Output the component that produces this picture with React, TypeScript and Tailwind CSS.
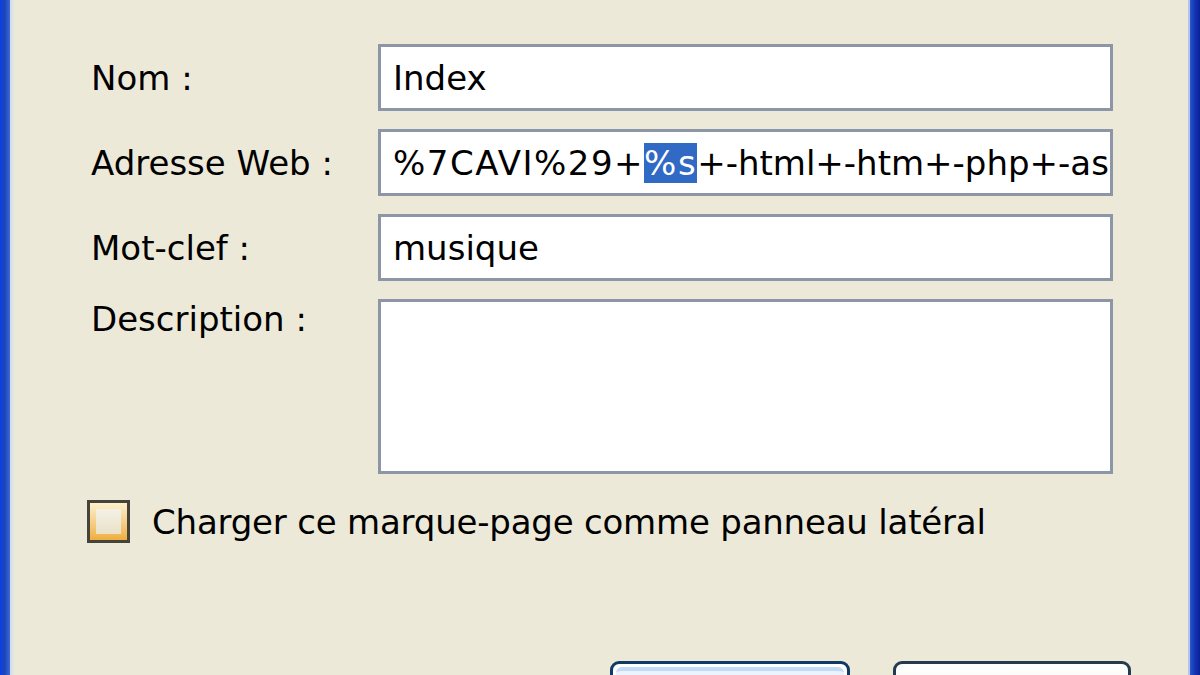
import * as React from 'react';

// Fenêtre « Propriétés du marque-page » (style Windows XP, agrandie)

function Field({ value }: { value: React.ReactNode }): React.ReactElement {
  return (
    <div className="flex h-[67px] items-center overflow-hidden whitespace-nowrap border-[3px] border-[#8d96a6] bg-white pl-[12px] pr-[5px] leading-[40px] text-black">
      {value}
    </div>
  );
}

function Label({ text, top }: { text: string; top?: boolean }): React.ReactElement {
  return (
    <div className={top ? 'pt-0 leading-[40px]' : 'flex h-[67px] items-center leading-[40px]'}>
      {text}
    </div>
  );
}

export default function App(): React.ReactElement {
  return (
    <div className="flex h-[675px] w-[1200px] overflow-hidden bg-[#ece9d8] font-['DejaVu_Sans',sans-serif] text-[34px] text-black">
      {/* bord gauche de la fenêtre */}
      <div className="w-[10px] shrink-0 bg-gradient-to-r from-[#0b3de6] via-[#1d46b6] to-[#3f6ad6]" />
      <div className="w-[4px] shrink-0 bg-gradient-to-r from-[#c9dbf4] to-[#e6e8dc]" />

      <div className="flex-1 pl-[77px] pt-[44px]">
        <div className="grid grid-cols-[287px_735px] gap-y-[18px]">
          <Label text="Nom :" />
          <Field value="Index" />

          <Label text="Adresse Web :" />
          <Field
            value={
              <span>
                <span className="tracking-[1.5px]">%7CAVI%29+</span>
                <span className="bg-[#316ac5] tracking-[1.5px] text-white">%s</span>
                +-html+-htm+-php+-asp
              </span>
            }
          />

          <Label text="Mot-clef :" />
          <Field value="musique" />

          <Label text="Description :" top />
          <div className="h-[175px] border-[3px] border-[#8d96a6] bg-white" />
        </div>

        <div className="mt-[26px] flex h-[43px] items-center">
          <div className="ml-[-4px] h-[43px] w-[43px] border-[3px] border-[#45433a] bg-gradient-to-b from-[#fdf1cd] to-[#eeae3a] p-[6px]">
            <div className="h-full w-full bg-gradient-to-b from-[#f4f1e6] to-[#e9e2c8]" />
          </div>
          <span className="ml-[22px] leading-[40px] tracking-[-0.2px]">
            Charger ce marque-page comme panneau latéral
          </span>
        </div>

        <div className="ml-[519px] mt-[118px] flex gap-[43px]">
          <div className="h-[77px] w-[240px] rounded-[9px] border-[3px] border-[#0f3a66] bg-white p-[3px]">
            <div className="h-full w-full rounded-[6px] border-t-[4px] border-[#c3daf5] bg-gradient-to-b from-[#eaf3fd] to-[#ffffff]" />
          </div>
          <div className="h-[77px] w-[238px] rounded-[9px] border-[3px] border-[#233a4f] bg-gradient-to-b from-[#ffffff] to-[#f0f0ea]" />
        </div>
      </div>

      {/* bord droit */}
      <div className="w-[2px] shrink-0 bg-[#b3c6ea]" />
      <div className="w-[10px] shrink-0 bg-gradient-to-r from-[#2a56cc] via-[#1533b0] to-[#0a1f9c]" />
    </div>
  );
}
